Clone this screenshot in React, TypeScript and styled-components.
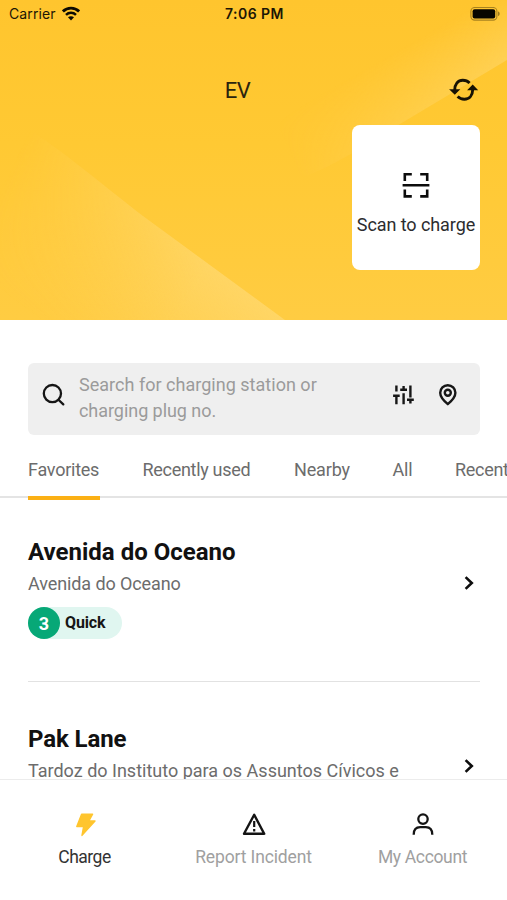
import React from 'react';
import styled, { createGlobalStyle } from 'styled-components';

const GlobalStyle = createGlobalStyle`
  * { box-sizing: border-box; }
  body { margin: 0; background: #fff; }
`;

const Screen = styled.div`
  width: 507px;
  height: 900px;
  display: flex;
  flex-direction: column;
  overflow: hidden;
  background: #fff;
  color: #111;
  font-family: Roboto, 'Noto Sans', sans-serif;
`;

const Label = styled.span<{ $track?: number }>`
  letter-spacing: ${(p) => p.$track ?? 0}px;
  white-space: nowrap;
`;

const Hero = styled.header`
  position: relative;
  isolation: isolate;
  flex: none;
  height: 320px;
  display: flex;
  flex-direction: column;
  background: linear-gradient(180deg, #ffc52e 0%, #ffc933 45%, #ffcc42 100%);
`;

const HeroBackdrop = styled.svg`
  position: absolute;
  inset: 0;
  z-index: -1;
`;

const StatusBar = styled.div`
  height: 28px;
  padding: 0 7px 0 9px;
  display: grid;
  grid-template-columns: 1fr auto 1fr;
  align-items: center;
  color: #1c1605;
  font: 400 14px/28px Inter, sans-serif;
`;

const StatusLeft = styled.div`
  display: flex;
  align-items: center;
  gap: 6px;
`;

const Clock = styled.div`
  font-weight: 600;
  letter-spacing: 0.45px;
`;

const StatusRight = styled.div`
  display: flex;
  justify-content: flex-end;
`;

const TitleBar = styled.div`
  height: 97px;
  padding: 25px 28px 0;
  display: grid;
  grid-template-columns: 1fr auto 1fr;
  align-items: start;
`;

const Title = styled.h1`
  grid-column: 2;
  margin: 0 32px 0 0;
  font-size: 22px;
  font-weight: 400;
  line-height: 76px;
  color: #2b240e;
`;

const RefreshButton = styled.button`
  justify-self: end;
  display: flex;
  margin-top: 24px;
  padding: 0;
  border: 0;
  background: none;
`;

const ScanCard = styled.button`
  align-self: flex-end;
  width: 128px;
  height: 145px;
  margin: 0 27px 0 0;
  padding: 45px 0 0;
  display: flex;
  flex-direction: column;
  align-items: center;
  gap: 12px;
  border: 0;
  border-radius: 8px;
  background: #fff;
  color: #2c2c2e;
  font: 400 18px/26px Roboto, sans-serif;
`;

const SearchBox = styled.div`
  flex: none;
  height: 72px;
  margin: 43px 27px 0 28px;
  padding: 0 22px 0 14px;
  display: flex;
  align-items: center;
  border-radius: 6px;
  background: #efefef;
`;

const Placeholder = styled.div`
  flex: 1;
  display: flex;
  flex-direction: column;
  margin-left: 13px;
  padding-bottom: 3px;
  color: #9b9b9b;
  font-size: 18px;
  line-height: 26px;
`;

const SearchTools = styled.div`
  display: flex;
  align-items: center;
  gap: 23px;
  padding-bottom: 9px;
`;

const SearchGlyph = styled.div`
  display: flex;
  padding-bottom: 9px;
`;

const Tabs = styled.nav`
  flex: none;
  height: 65px;
  padding-left: 28px;
  display: flex;
  align-items: stretch;
  overflow: hidden;
  background: linear-gradient(#e4e4e4, #e4e4e4) 0 61px / 100% 2px no-repeat;
`;

const Tab = styled.div<{ $active?: boolean; $width: number }>`
  flex: none;
  width: ${(p) => p.$width}px;
  margin-right: 42.5px;
  border-bottom: 4px solid ${(p) => (p.$active ? '#fbb015' : 'transparent')};
  color: #6c6c6c;
  font-size: 18px;
  line-height: 70px;
`;

const List = styled.main`
  flex: 1;
  min-height: 0;
  overflow: hidden;
  padding: 36px 27px 0 28px;
`;

const Station = styled.article`
  height: 187px;
  display: flex;
  justify-content: space-between;
`;

const StationInfo = styled.div`
  display: flex;
  flex-direction: column;
  align-items: flex-start;
`;

const StationName = styled.h2`
  margin: 0;
  font-size: 24px;
  font-weight: 700;
  line-height: 32px;
`;

const StationAddress = styled.div`
  margin-top: 2px;
  color: #6c6c6c;
  font-size: 18px;
  line-height: 28px;
`;

const Chevron = styled.svg<{ $top: number }>`
  flex: none;
  margin: ${(p) => p.$top}px 5px 0 0;
`;

const Divided = styled.div`
  height: 187px;
  background: linear-gradient(#e2e2e2, #e2e2e2) 0 145px / 100% 1px no-repeat;
`;

const Chip = styled.div`
  height: 32px;
  margin-top: 9px;
  padding-right: 17px;
  display: flex;
  align-items: center;
  gap: 5px;
  border-radius: 16px;
  background: #e0f6f0;
  color: #151515;
  font-size: 16px;
  line-height: 32px;
  font-weight: 700;
`;

const ChipCount = styled.span`
  width: 32px;
  height: 32px;
  border-radius: 50%;
  background: #07a877;
  color: #fff;
  font-size: 18px;
  line-height: 33px;
  text-align: center;
`;

const BottomNav = styled.nav`
  flex: none;
  height: 121px;
  display: grid;
  grid-template-columns: repeat(3, 1fr);
  border-top: 1px solid #ececec;
  background: #fff;
`;

const NavItem = styled.div<{ $active?: boolean }>`
  display: flex;
  flex-direction: column;
  align-items: center;
  padding-top: 31px;
  gap: 7px;
  color: ${(p) => (p.$active ? '#333' : '#a0a0a0')};
  font-size: 17.5px;
  line-height: 26px;
`;

const Backdrop = () => (
  <HeroBackdrop width="507" height="320" viewBox="0 0 507 320">
    <defs>
      <linearGradient id="lower" gradientUnits="userSpaceOnUse" x1="200" y1="259" x2="115" y2="375">
        <stop offset="0" stopColor="#ffdb7a" stopOpacity="0.62" />
        <stop offset="1" stopColor="#ffdb7a" stopOpacity="0" />
      </linearGradient>
      <linearGradient id="lowerFade" gradientUnits="userSpaceOnUse" x1="20" y1="150" x2="215" y2="250">
        <stop offset="0" stopColor="#000" />
        <stop offset="1" stopColor="#fff" />
      </linearGradient>
      <mask id="lowerMask">
        <rect width="507" height="320" fill="url(#lowerFade)" />
      </mask>
      <linearGradient id="upper" gradientUnits="userSpaceOnUse" x1="430" y1="106" x2="398" y2="50">
        <stop offset="0" stopColor="#ffd76c" stopOpacity="0.6" />
        <stop offset="1" stopColor="#ffd76c" stopOpacity="0" />
      </linearGradient>
      <linearGradient id="upperFade" gradientUnits="userSpaceOnUse" x1="290" y1="165" x2="507" y2="60">
        <stop offset="0" stopColor="#000" />
        <stop offset="0.4" stopColor="#777" />
        <stop offset="1" stopColor="#fff" />
      </linearGradient>
      <mask id="upperMask">
        <rect width="507" height="320" fill="url(#upperFade)" />
      </mask>
    </defs>
    <path d="M0 111 C55 143 100 183 143 216 L285 320 H0Z" fill="url(#lower)" mask="url(#lowerMask)" />
    <path d="M507 60 L400 124 C365 145 340 163 302 178 L280 130 V0 H507Z" fill="url(#upper)" mask="url(#upperMask)" />
  </HeroBackdrop>
);

const WifiIcon = () => (
  <svg width="18" height="16" viewBox="0 0 18 16" fill="none" stroke="#0d0a02">
    <path d="M.9 5.4C5.4 1 12.6 1 17.1 5.4" strokeWidth="2.8" />
    <path d="M4 8.8C6.8 6.1 11.2 6.1 14 8.8" strokeWidth="2.5" />
    <path d="M9 14.4 6 11.3C7.7 9.8 10.3 9.8 12 11.3Z" fill="#0d0a02" stroke="none" />
  </svg>
);

const BatteryIcon = () => (
  <svg width="30" height="15" viewBox="0 0 30 15">
    <rect x="0.9" y="0.5" width="26" height="12.6" rx="3.8" fill="none" stroke="#8b6b18" strokeOpacity=".75" strokeWidth="1.1" />
    <rect x="2.6" y="2.2" width="22.6" height="9.2" rx="2" fill="#080600" />
    <path d="M28.2 4.6c1.8.5 1.8 4 0 4.5z" fill="#8b6b18" />
  </svg>
);

const RefreshIcon = () => (
  <svg width="30" height="26" viewBox="0 0 30 26" fill="none" stroke="#171204" strokeWidth="2.9">
    <path d="M5.7 13.2C5.8 7.2 9 3.2 13.8 3.2c2.7 0 4.9.9 6.8 2.8" />
    <path d="M23.7 12.4C23.6 18.4 20.3 22.2 15.4 22.2c-2.7 0-4.9-.8-6.8-2.7" />
    <path d="M.1 12.2 5.8 17.8 11.3 12.2ZM18.1 13.2 23.7 7.6 29.2 13.2Z" fill="#171204" stroke="none" />
  </svg>
);

const ScanIcon = () => (
  <svg width="28" height="30" viewBox="0 0 28 30" fill="none" stroke="#0c0c0c" strokeWidth="2.6">
    <path d="M2.8 11V4.2H9.8M18.2 4.2H25.2V11M2.8 19.6V26.4H9.8M18.2 26.4H25.2V19.6M.6 15.3H27.4" />
  </svg>
);

const SearchIcon = () => (
  <svg width="24" height="24" viewBox="0 0 24 24" fill="none" stroke="#151515" strokeWidth="2.3" strokeLinecap="round">
    <circle cx="10.4" cy="10.6" r="8.6" />
    <path d="M16.7 17 21.3 21.4" />
  </svg>
);

const FilterIcon = () => (
  <svg width="22" height="22" viewBox="0 0 22 22" fill="none" stroke="#171717" strokeWidth="2.4">
    <path d="M3.4 1.4v6.2M.1 11.8h6.6M3.4 11.8V20.2M7.2 5.8h6.8M10.6 2v4M10.6 9.2v11M17.4 1.4v12.2M14 15.8h6.8M17.4 15.8v3.6" />
  </svg>
);

const PinIcon = () => (
  <svg width="20" height="22" viewBox="0 0 20 22" fill="none" stroke="#171717" strokeWidth="2.4" strokeLinejoin="round">
    <path d="M9.8 20.2C5 16.2 2.2 12.7 2.2 8.8A7.6 7.6 0 0 1 17.4 8.8C17.4 12.7 14.6 16.2 9.8 20.2Z" />
    <circle cx="9.8" cy="8.8" r="3" />
  </svg>
);

const ChevronIcon = ({ top }: { top: number }) => (
  <Chevron $top={top} width="12" height="16" viewBox="0 0 12 16" fill="none" stroke="#0d0d0d" strokeWidth="2.6">
    <path d="M2.6 2.1 8.8 8 2.6 13.9" />
  </Chevron>
);

const BoltIcon = () => (
  <svg width="22" height="26" viewBox="0 0 22 26">
    <path d="M7.6 3.2H18.6L14.9 10H21L8 24.4L9.6 15.6H2.8Z" fill="#ffc52e" stroke="#ffc52e" strokeWidth="1.4" strokeLinejoin="round" />
  </svg>
);

const WarningIcon = () => (
  <svg width="26" height="26" viewBox="0 0 26 26" fill="none" stroke="#141414" strokeWidth="2.4" strokeLinejoin="round">
    <path d="M13.2 3.8 23.2 22.8H3Z" />
    <path d="M13.2 10v6M13.2 18v2.4" strokeWidth="2.2" />
  </svg>
);

const PersonIcon = () => (
  <svg width="24" height="26" viewBox="0 0 24 26" fill="none" stroke="#141414" strokeWidth="2.3">
    <circle cx="12" cy="8.1" r="4.7" />
    <path d="M2.7 23.7c0-5.2 2.9-7.5 6.5-7.5h5.6c3.6 0 6.5 2.3 6.5 7.5" />
  </svg>
);

export default function App() {
  return (
    <>
      <GlobalStyle />
      <Screen>
        <Hero>
          <Backdrop />
          <StatusBar>
            <StatusLeft>
              <Label $track={0.12}>Carrier</Label>
              <WifiIcon />
            </StatusLeft>
            <Clock>7:06 PM</Clock>
            <StatusRight><BatteryIcon /></StatusRight>
          </StatusBar>
          <TitleBar>
            <Title><Label $track={-0.6}>EV</Label></Title>
            <RefreshButton aria-label="Refresh"><RefreshIcon /></RefreshButton>
          </TitleBar>
          <ScanCard>
            <ScanIcon />
            <Label $track={-0.08}>Scan to charge</Label>
          </ScanCard>
        </Hero>

        <SearchBox>
          <SearchGlyph><SearchIcon /></SearchGlyph>
          <Placeholder>
            <Label $track={0.02}>Search for charging station or</Label>
            <Label $track={-0.05}>charging plug no.</Label>
          </Placeholder>
          <SearchTools>
            <FilterIcon />
            <PinIcon />
          </SearchTools>
        </SearchBox>

        <Tabs>
          <Tab $active $width={72}><Label $track={-0.25}>Favorites</Label></Tab>
          <Tab $width={109}><Label $track={-0.3}>Recently used</Label></Tab>
          <Tab $width={56}><Label $track={-0.15}>Nearby</Label></Tab>
          <Tab $width={20}><Label $track={-0.2}>All</Label></Tab>
          <Tab $width={90}><Label $track={-0.3}>Recently</Label></Tab>
        </Tabs>

        <List>
          <Divided>
            <Station>
              <StationInfo>
                <StationName><Label>Avenida do Oceano</Label></StationName>
                <StationAddress><Label $track={-0.1}>Avenida do Oceano</Label></StationAddress>
                <Chip>
                  <ChipCount>3</ChipCount>
                  <Label $track={-0.15}>Quick</Label>
                </Chip>
              </StationInfo>
              <ChevronIcon top={39} />
            </Station>
          </Divided>
          <Station>
            <StationInfo>
              <StationName><Label $track={-0.1}>Pak Lane</Label></StationName>
              <StationAddress><Label>Tardoz do Instituto para os Assuntos Cívicos e</Label></StationAddress>
            </StationInfo>
            <ChevronIcon top={35} />
          </Station>
        </List>

        <BottomNav>
          <NavItem $active><BoltIcon /><Label $track={-0.5}>Charge</Label></NavItem>
          <NavItem><WarningIcon /><Label $track={-0.13}>Report Incident</Label></NavItem>
          <NavItem><PersonIcon /><Label $track={-0.35}>My Account</Label></NavItem>
        </BottomNav>
      </Screen>
    </>
  );
}
